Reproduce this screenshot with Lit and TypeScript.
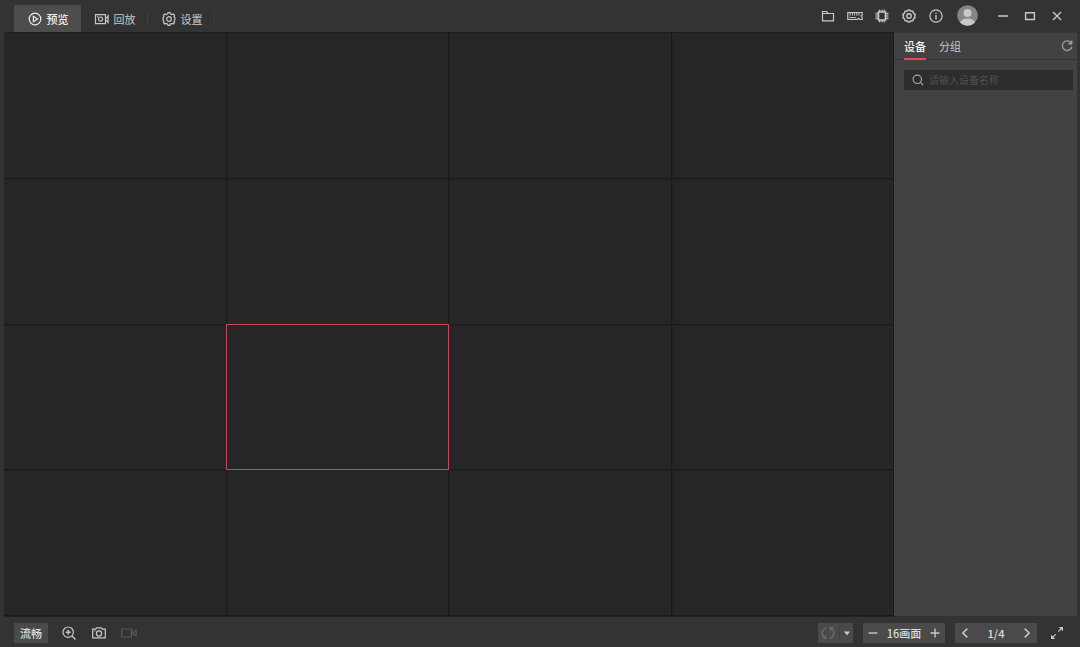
import { LitElement, html, css, svg, TemplateResult } from "lit";
import { customElement, state, property } from "lit/decorators.js";
import { classMap } from "lit/directives/class-map.js";

const icons: Record<string, TemplateResult> = {
  play: svg`<circle cx="8" cy="8" r="5.8"/><path d="M6.4 5.3v5.4L10.6 8z"/>`,
  playback: svg`<path d="M1.5 3.6h10v9h-10z"/><circle cx="6.5" cy="8.1" r="2.1"/><path d="M3 5.4h1M11.5 6.8h1.300l1.300-2v6.600l-1.300-1.600h-1.300"/>`,
  gear: svg`<path d="M6.8 2.7 7.1 1.5h1.8l.3 1.2 1.6.8 1.3-.6 1.4 1.3-.4 1.4.8 1.4v1.8l-.8 1.4.4 1.3-1.4 1.5-1.3-.6-1.6.8-.3 1.2H7.1l-.3-1.2-1.6-.8-1.3.6-1.4-1.5.4-1.3-.8-1.4V7l.8-1.4-.4-1.4 1.4-1.3 1.3.6z"/><circle cx="8" cy="8" r="2.3"/>`,
  cog: svg`<path d="M6.300 3.200Q8 .4 9.700 3.200 12.800 2.300 12.300 5.200 15.600 6.200 13.300 8 15.600 9.800 12.300 10.800 12.800 13.700 9.700 12.800 8 15.600 6.300 12.800 3.200 13.700 3.700 10.800.4 9.800 2.700 8 .4 6.200 3.700 5.200 3.200 2.300 6.300 3.200z" stroke-width="1.400" stroke-linejoin="round"/><circle cx="8" cy="8" r="2.200" stroke-width="1.400"/>`,
  folder: svg`<path d="M2.500 12.800v-9.300h4.200l1.600 2h5.200v7.300zM2.500 5.500h6"/>`,
  keyboard: svg`<path d="M.8 4.500h14.400v2.600l-1 .9 1 .9v2.600h-2.400l-1.200-1.200-1.200 1.200H.8z"/><path d="M3.200 5v2.600M5.400 5v2.600M7.600 5v2.600M9.800 5v2.600M12 5v2.600M2.400 9.600h6.800" stroke-width="1"/>`,
  chip: svg`<path d="M4.500 4h7v8h-7z" stroke-width="1.600"/><path d="M5.500 1.700V4M7.200 1.700V4M8.900 1.700V4M10.600 1.700V4M5.500 12v2.300M7.200 12v2.300M8.900 12v2.300M10.600 12v2.300M1.500 5.300h3M1.500 7.100h3M1.500 8.900h3M1.500 10.700h3M11.500 5.300h3M11.500 7.100h3M11.500 8.900h3M11.500 10.700h3" stroke-width="1"/>`,
  info: svg`<circle cx="8" cy="8" r="6.1"/><path d="M8 7v4.500M8 4.500v1.200" stroke-width="1.400"/>`,
  minimize: svg`<path d="M3 8h10" stroke-width="1.500"/>`,
  maximize: svg`<path d="M3.600 4.700h8.800v6.800H3.600z" stroke-width="1.400"/>`,
  close: svg`<path d="m4 4 8 8M12 4l-8 8" stroke-width="1.400"/>`,
  refresh: svg`<path d="M12 4.800A4.800 4.800 0 1 0 12.800 9M12.700 2.500v3.300H9.400" stroke-width="1.400"/>`,
  search: svg`<circle cx="7.300" cy="7.300" r="4.200"/><path d="m10.400 10.400 2.800 2.800"/>`,
  zoom: svg`<circle cx="7.200" cy="7.200" r="5.200"/><path d="m11 11 3.500 3.500M4.700 7.200h5M7.200 4.700v5" stroke-width="1.400"/>`,
  camera: svg`<path d="M1.700 4.200h3l.8-1.300h5l.8 1.300h3v8.700H1.700z"/><circle cx="8" cy="8.500" r="2.600"/><path d="M3.200 6h1.300"/>`,
  video: svg`<path d="M.8 4h9.800v8H.8zM15.200 5v6L12.700 9.400V6.600zM10.600 8h2"/>`,
  cycle: svg`<path d="M6.500 2.600C1.500 4 .9 10.600 5 13M2.600 13.200h3v-3M9.500 13.400C14.500 12 15.100 5.400 11 3M13.400 2.800h-3v3" stroke-width="1.400"/>`,
  caret: svg`<path d="M5 6.500h6L8 10.200z" fill="currentColor" stroke="none"/>`,
  minus: svg`<path d="M3.500 8h9" stroke-width="1.400"/>`,
  plus: svg`<path d="M3.500 8h9M8 3.500v9" stroke-width="1.400"/>`,
  prev: svg`<path d="M10.300 3.600 5.900 8l4.400 4.400" stroke-width="1.500"/>`,
  next: svg`<path d="M5.700 3.600 10.100 8l-4.400 4.400" stroke-width="1.500"/>`,
  expand: svg`<path d="m9.300 6.700 3.500-3.500M6.700 9.300l-3.500 3.500"/><path d="M9.800 2h4.200v4.200zM2 9.800v4.200h4.200z" fill="currentColor" stroke="none"/>`,
};

@customElement("ui-icon")
export class UiIcon extends LitElement {
  @property() name = "";
  static styles = css`
    :host { display: block; width: 16px; height: 16px; flex: none; }
    svg { display: block; width: 100%; height: 100%; fill: none; stroke: currentColor; stroke-width: 1.2; }
  `;
  render() {
    return html`<svg viewBox="0 0 16 16" aria-hidden="true">${icons[this.name]}</svg>`;
  }
}

@customElement("app-root")
export class AppRoot extends LitElement {
  @state() private tab = 0;
  @state() private listTab = 0;
  @state() private selected = 9;

  static styles = css`
    :host {
      display: grid;
      grid-template-rows: 32px 1fr 31px;
      height: 100vh;
      overflow: hidden;
      box-sizing: border-box;
      background: #333333;
      color: #c8c8c8;
      font: 11px/16px "Noto Sans CJK SC", sans-serif;
    }
    button {
      display: flex;
      align-items: center;
      justify-content: center;
      border: 0;
      padding: 0;
      background: none;
      color: inherit;
      font: inherit;
      cursor: pointer;
    }
    button:disabled { color: #595959; cursor: default; }
    .header { display: flex; justify-content: space-between; padding: 0 10px 0 14px; }
    .tabs { display: flex; align-items: flex-end; }
    .tab {
      position: relative;
      gap: 4px;
      width: 67px;
      height: 27px;
    }
    .tab:not(.active)::after {
      content: "";
      position: absolute;
      right: 0;
      height: 14px;
      border-right: 1px solid #3e3e3e;
    }
    .tab.active { background: #4d4d4d; color: #eeeeee; font-weight: 500; }
    .tools { display: flex; align-items: center; height: 31px; }
    .tool { width: 27px; height: 27px; }
    .avatar { width: 20px; height: 20px; margin: 0 12px 0 8px; }
    .avatar svg { display: block; width: 21px; height: 21px; flex: none; }
    .main { display: grid; grid-template-columns: 1fr 183px; padding: 0 3px 0 4px; min-height: 0; }
    .wall {
      display: grid;
      grid-template: repeat(4, 1fr) / repeat(4, 1fr);
      background: #262626;
      border-top: 1px solid #1e1e1e;
    }
    .cell { border-right: 1px solid #1a1a1a; border-bottom: 1px solid #1a1a1a; box-shadow: 1px 1px #222222; }
    .cell.selected { border: 0; margin: -1px 0 0 -1px; outline: 1px solid #c9485d; outline-offset: -1px; z-index: 1; }
    .side { background: #424242; border-top: 1px solid #383838; z-index: 1; }
    .side-head {
      display: flex;
      align-items: stretch;
      gap: 13px;
      height: 26px;
      padding: 0 2px 0 10px;
      border-bottom: 1px solid #343434;
    }
    .list-tab { height: 27px; border-bottom: 2px solid transparent; }
    .list-tab.active { border-color: #e0485f; color: #f2f2f2; font-weight: 500; }
    .refresh { margin-left: auto; color: #9d9d9d; }
    .search {
      display: flex;
      align-items: center;
      gap: 3px;
      height: 20px;
      margin: 10px 4px 0 10px;
      padding: 0 6px;
      background: #2d2d2d;
      color: #a6a6a6;
    }
    .search input {
      flex: 1;
      min-width: 0;
      padding: 0;
      border: 0;
      outline: 0;
      background: none;
      color: #c8c8c8;
      font: 10px/16px "Noto Sans CJK SC", sans-serif;
    }
    .search input::placeholder { color: #505050; opacity: 1; }
    .footer { display: flex; align-items: center; justify-content: space-between; padding: 3px 8px 0 14px; }
    .group { display: flex; align-items: center; }
    .box { display: flex; align-items: center; justify-content: space-between; height: 20px; background: #4a4a4a; }
    .box.quality { justify-content: center; width: 34px; margin-right: 6px; color: #dddddd; font-weight: 500; }
    .action { width: 30px; height: 20px; }
    .cycle { width: 35px; margin-right: 10px; }
    .cycle .main-part { width: 20px; height: 20px; color: #6a6a6a; }
    .cycle .more { width: 14px; height: 14px; border-left: 1px solid #3f3f3f; color: #d0d0d0; }
    .pager { width: 82px; margin-right: 10px; color: #dcdcdc; font-weight: 500; }
    .pager.last { margin-right: 5px; }
    .step { width: 20px; height: 20px; color: #c8c8c8; }
  `;

  render() {
    const tabs = [["play", "预览"], ["playback", "回放"], ["gear", "设置"]];
    const tools = [["folder", "文件"], ["keyboard", "键盘"], ["chip", "系统"], ["cog", "设置"], ["info", "关于"]];
    const win = [["minimize", "最小化"], ["maximize", "最大化"], ["close", "关闭"]];
    const tool = ([name, label]: string[]) =>
      html`<button class="tool" aria-label=${label}><ui-icon name=${name}></ui-icon></button>`;
    return html`
      <header class="header">
        <nav class="tabs">
          ${tabs.map(([name, label], i) => html`
            <button class=${classMap({ tab: true, active: this.tab === i })} @click=${() => (this.tab = i)}>
              <ui-icon name=${name}></ui-icon>${label}
            </button>`)}
        </nav>
        <div class="tools">
          ${tools.map(tool)}
          <button class="avatar" aria-label="用户">
            <svg viewBox="0 0 21 21">
              <defs><clipPath id="round"><circle cx="10.5" cy="10.5" r="10.3"/></clipPath></defs>
              <g clip-path="url(#round)">
                <path fill="#858585" d="M0 0h21v21H0z"/>
                <circle cx="10.5" cy="8" r="4" fill="#c8c8c8"/>
                <ellipse cx="10.5" cy="18.5" rx="7.5" ry="5" fill="#c8c8c8"/>
              </g>
            </svg>
          </button>
          ${win.map(tool)}
        </div>
      </header>
      <main class="main">
        <section class="wall">
          ${Array.from({ length: 16 }, (_, i) => html`
            <div class=${classMap({ cell: true, selected: this.selected === i })} @click=${() => (this.selected = i)}></div>`)}
        </section>
        <aside class="side">
          <div class="side-head">
            ${["设备", "分组"].map((label, i) => html`
              <button class=${classMap({ "list-tab": true, active: this.listTab === i })} @click=${() => (this.listTab = i)}>${label}</button>`)}
            <button class="refresh" aria-label="刷新"><ui-icon name="refresh"></ui-icon></button>
          </div>
          <label class="search">
            <ui-icon name="search"></ui-icon>
            <input type="text" aria-label="设备名称" placeholder="请输入设备名称">
          </label>
        </aside>
      </main>
      <footer class="footer">
        <div class="group">
          <button class="box quality">流畅</button>
          <button class="action" aria-label="放大"><ui-icon name="zoom"></ui-icon></button>
          <button class="action" aria-label="抓图"><ui-icon name="camera"></ui-icon></button>
          <button class="action" aria-label="录像" disabled><ui-icon name="video"></ui-icon></button>
        </div>
        <div class="group">
          <div class="box cycle">
            <button class="main-part" aria-label="轮巡" disabled><ui-icon name="cycle"></ui-icon></button>
            <button class="more" aria-label="轮巡选项"><ui-icon name="caret"></ui-icon></button>
          </div>
          <div class="box pager">
            <button class="step" aria-label="减少"><ui-icon name="minus"></ui-icon></button>
            <span>16画面</span>
            <button class="step" aria-label="增加"><ui-icon name="plus"></ui-icon></button>
          </div>
          <div class="box pager last">
            <button class="step" aria-label="上一页"><ui-icon name="prev"></ui-icon></button>
            <span>1/4</span>
            <button class="step" aria-label="下一页"><ui-icon name="next"></ui-icon></button>
          </div>
          <button class="action" aria-label="全屏"><ui-icon name="expand"></ui-icon></button>
        </div>
      </footer>
    `;
  }
}
